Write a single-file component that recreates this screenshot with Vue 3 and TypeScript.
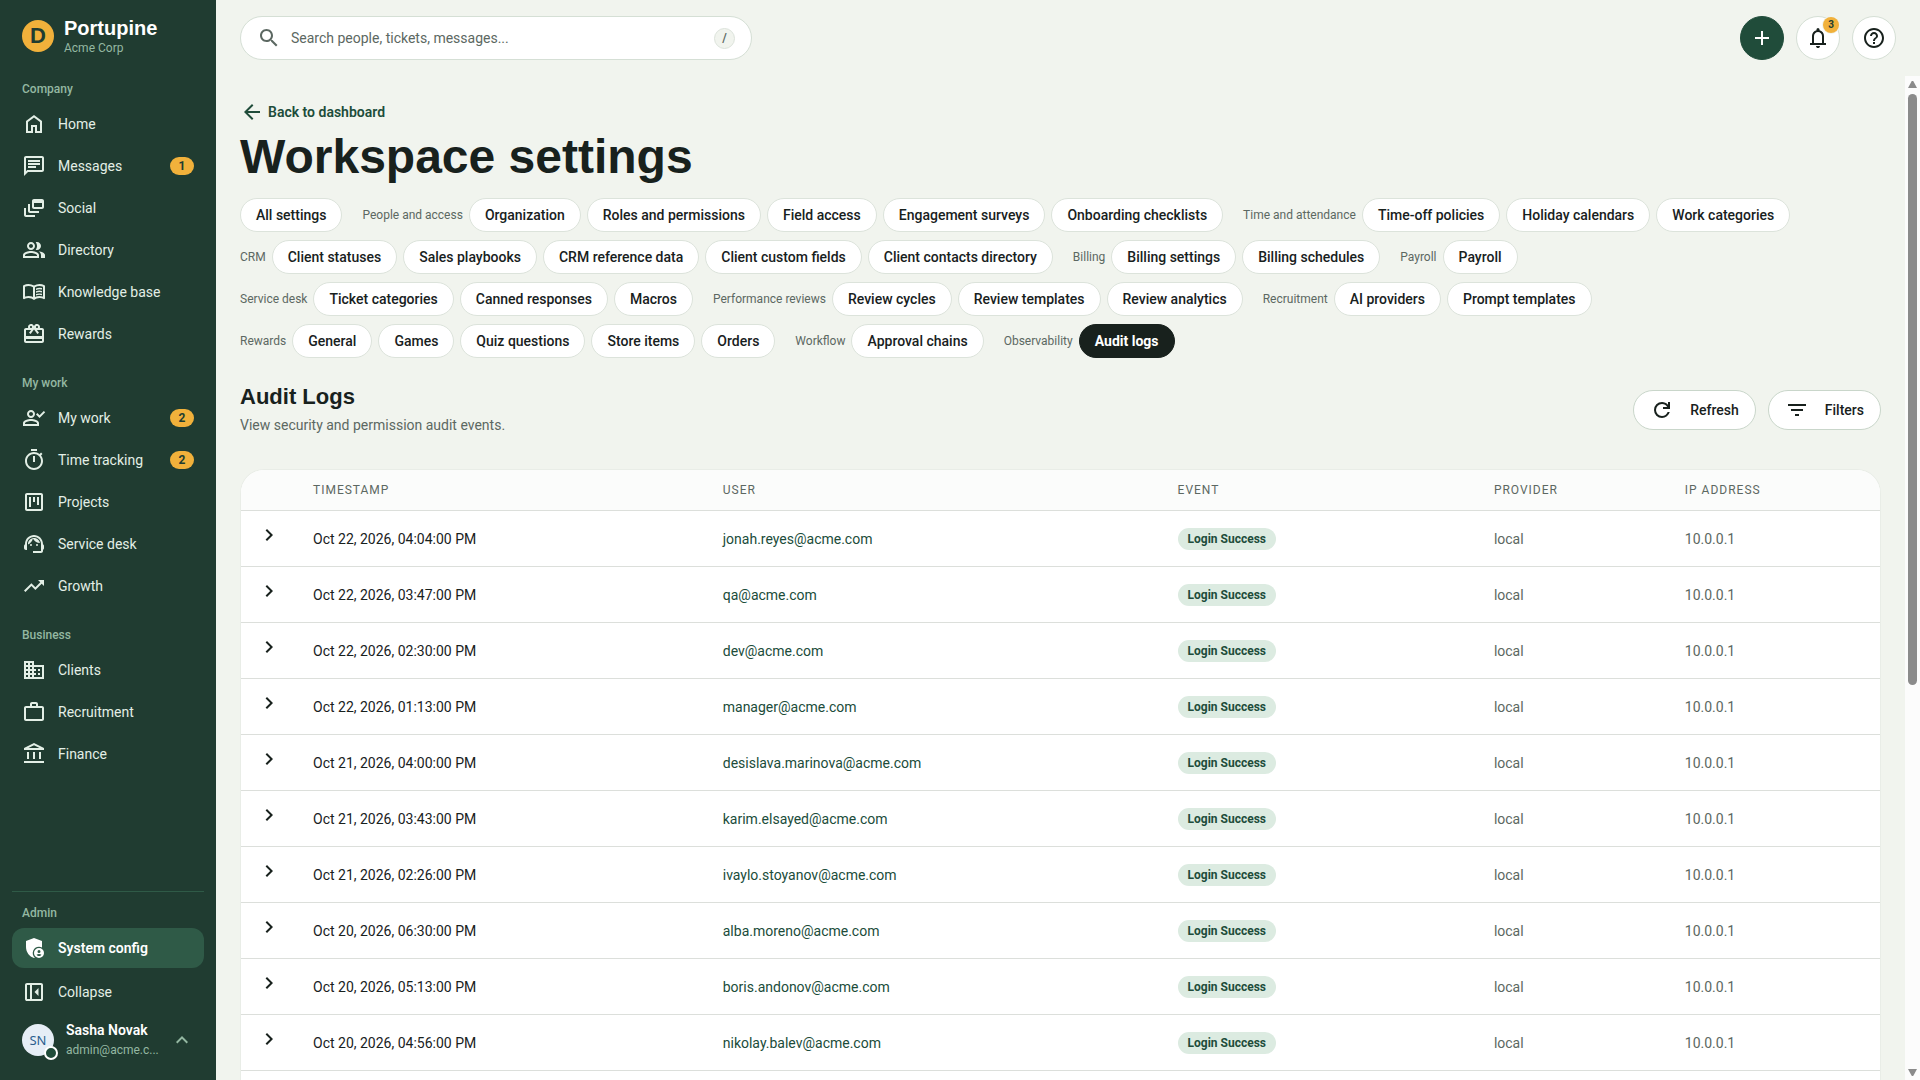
<script setup lang="ts">
import { ref } from 'vue'

interface NavItem { label: string; icon: string; badge?: number }
interface NavSection { title: string; items: NavItem[] }
interface ChipGroup { label?: string; chips: string[] }
interface LogRow { time: string; user: string }

const icons: Record<string, string> = {
  home: 'M6 19h3v-6h6v6h3v-9l-6-4.5L6 10v9zm-2 2V9l8-6 8 6v12h-7v-6h-2v6H4z',
  chat: 'M4 4h16v12H5.17L4 17.17V4m0-2c-1.1 0-1.99.9-1.99 2L2 22l4-4h14c1.1 0 2-.9 2-2V4c0-1.1-.9-2-2-2H4zm2 10h8v2H6v-2zm0-3h12v2H6V9zm0-3h12v2H6V6z',
  feed: 'M8 8H6v7c0 1.1.9 2 2 2h9v-2H8V8zM20 3h-8c-1.1 0-2 .9-2 2v6c0 1.1.9 2 2 2h8c1.1 0 2-.9 2-2V5c0-1.1-.9-2-2-2zm0 8h-8V7h8v4zM4 12H2v7c0 1.1.9 2 2 2h9v-2H4v-7z',
  group: 'M16.67 13.13C18.04 14.06 19 15.32 19 17v3h4v-3c0-2.18-3.57-3.47-6.33-3.87zM15 12c2.21 0 4-1.79 4-4s-1.79-4-4-4c-.47 0-.91.1-1.33.24C14.5 5.27 15 6.58 15 8s-.5 2.73-1.33 3.76c.42.14.86.24 1.33.24zM9 12c2.21 0 4-1.79 4-4s-1.79-4-4-4-4 1.79-4 4 1.79 4 4 4zm0-6c1.1 0 2 .9 2 2s-.9 2-2 2-2-.9-2-2 .9-2 2-2zm0 7c-2.67 0-8 1.34-8 4v3h16v-3c0-2.66-5.33-4-8-4zm6 5H3v-.99C3.2 16.29 6.3 15 9 15s5.8 1.29 6 2v1z',
  book: 'M6.5 16q1.17 0 2.28.26T11 17.05V7.2q-1.02-.6-2.17-.9T6.5 6q-.9 0-1.79.17T3 6.7v9.9q.87-.3 1.74-.45T6.5 16zM13 17.05q1.1-.52 2.21-.79T17.5 16q.9 0 1.76.15T21 16.6V6.7q-.82-.35-1.71-.52T17.5 6q-1.18 0-2.33.3T13 7.2zM12 20q-1.2-.95-2.6-1.48T6.5 18q-1.05 0-2.06.28T2.5 19.05q-.52.28-1.01-.02T1 18.15V6.1q0-.28.14-.52T1.55 5.2q1.15-.6 2.4-.9T6.5 4q1.45 0 2.84.38T12 5.5q1.28-.75 2.66-1.12T17.5 4q1.3 0 2.55.3t2.4.9q.28.13.41.38t.14.52v12.05q0 .57-.49.87t-1.01.03q-.92-.5-1.94-.77T17.5 18q-1.5 0-2.9.53T12 20zM14 8.5q1.7-.7 3.5-.7 1.25 0 2.5.3v1.5q-1.2-.35-2.5-.35-1.85 0-3.5.75zM14 11.3q1.7-.7 3.5-.7 1.25 0 2.5.3v1.5q-1.2-.35-2.5-.35-1.85 0-3.5.75zM14 14.1q1.7-.7 3.5-.7 1.25 0 2.5.3v1.5q-1.2-.35-2.5-.35-1.85 0-3.5.75z',
  gift: 'M20 6h-2.18c.11-.31.18-.65.18-1 0-1.66-1.34-3-3-3-1.05 0-1.96.54-2.5 1.35l-.5.67-.5-.68C10.96 2.54 10.05 2 9 2 7.34 2 6 3.34 6 5c0 .35.07.69.18 1H4c-1.11 0-1.99.89-1.99 2L2 19c0 1.11.89 2 2 2h16c1.11 0 2-.89 2-2V8c0-1.11-.89-2-2-2zm-5-2c.55 0 1 .45 1 1s-.45 1-1 1-1-.45-1-1 .45-1 1-1zM9 4c.55 0 1 .45 1 1s-.45 1-1 1-1-.45-1-1 .45-1 1-1zm11 15H4v-2h16v2zm0-5H4V8h5.08L7 10.83 8.62 12 11 8.76l1-1.36 1 1.36L15.38 12 17 10.83 14.92 8H20v6z',
  check: 'M17.55 12 14 8.45l1.43-1.4 2.12 2.1L21.8 4.9l1.4 1.43zM9 12c2.21 0 4-1.79 4-4s-1.79-4-4-4-4 1.79-4 4 1.79 4 4 4zm0-6c1.1 0 2 .9 2 2s-.9 2-2 2-2-.9-2-2 .9-2 2-2zm0 7c-2.67 0-8 1.34-8 4v3h16v-3c0-2.66-5.33-4-8-4zm6 5H3v-.99C3.2 16.29 6.3 15 9 15s5.8 1.29 6 2v1z',
  timer: 'M15 1H9v2h6V1zm-4 13h2V8h-2v6zm8.03-6.61 1.42-1.42c-.43-.51-.9-.99-1.41-1.41l-1.42 1.42C16.07 4.74 14.12 4 12 4c-4.97 0-9 4.03-9 9s4.02 9 9 9 9-4.03 9-9c0-2.12-.74-4.07-1.97-5.61zM12 20c-3.87 0-7-3.13-7-7s3.13-7 7-7 7 3.13 7 7-3.13 7-7 7z',
  kanban: 'M19 5v14H5V5h14m0-2H5c-1.1 0-2 .9-2 2v14c0 1.1.9 2 2 2h14c1.1 0 2-.9 2-2V5c0-1.1-.9-2-2-2zM7 7h2v10H7zM11 7h2v5h-2zM15 7h2v8h-2z',
  agent: 'M21 12.22C21 6.73 16.74 3 12 3c-4.69 0-9 3.65-9 9.28-.6.34-1 .98-1 1.72v2c0 1.1.9 2 2 2h1v-6.1c0-3.87 3.13-7 7-7s7 3.13 7 7V19h-8v2h8c1.1 0 2-.9 2-2v-1.22c.59-.31 1-.92 1-1.64v-2.3c0-.7-.41-1.31-1-1.62zM8 13a1 1 0 1 0 2 0 1 1 0 1 0-2 0zM14 13a1 1 0 1 0 2 0 1 1 0 1 0-2 0zM18 11.03C17.52 8.18 15.04 6 12.05 6c-3.03 0-6.29 2.51-6.03 6.45 2.47-1.01 4.33-3.21 4.86-5.89 1.31 2.63 4 4.44 7.12 4.47z',
  trend: 'm16 6 2.29 2.29-4.88 4.88-4-4L2 16.59 3.41 18l6-6 4 4 6.3-6.29L22 12V6z',
  domain: 'M12 7V3H2v18h20V7H12zM6 19H4v-2h2v2zm0-4H4v-2h2v2zm0-4H4V9h2v2zm0-4H4V5h2v2zm4 12H8v-2h2v2zm0-4H8v-2h2v2zm0-4H8V9h2v2zm0-4H8V5h2v2zm10 12h-8v-2h2v-2h-2v-2h2v-2h-2V9h8v10zm-2-8h-2v2h2v-2zm0 4h-2v2h2v-2z',
  work: 'M14 6V4h-4v2h4zM4 8v11h16V8H4zm16-2c1.11 0 2 .89 2 2v11c0 1.11-.89 2-2 2H4c-1.11 0-2-.89-2-2l.01-11c0-1.11.88-2 1.99-2h4V4c0-1.11.89-2 2-2h4c1.11 0 2 .89 2 2v2h4z',
  bank: 'M5 17v-7h2v7H5zm6 0v-7h2v7h-2zm-9 4v-2h20v2H2zm15-4v-7h2v7h-2zM2 8V6l10-5 10 5v2H2zm4.475-2h11.05L12 3.25 6.475 6z',
  admin: 'M12 2 4 5v6.1c0 5 3.4 9.7 8 10.9l.9-.3A6.3 6.3 0 0 1 17 10.7c1.05 0 2.1.26 3 .74V5zM17 12a5 5 0 1 0 0 10 5 5 0 0 0 0-10zm0 2a1.5 1.5 0 1 1 0 3 1.5 1.5 0 0 1 0-3zm0 6c-1 0-1.9-.5-2.5-1.25.7-.5 1.6-.75 2.5-.75s1.8.25 2.5.75C18.9 19.5 18 20 17 20z',
  panel: 'M16.5 16V8l-4 4zM5 21q-.825 0-1.412-.587T3 19V5q0-.825.588-1.412T5 3h14q.825 0 1.413.588T21 5v14q0 .825-.587 1.413T19 21zm3-2V5H5v14zm2 0h9V5h-9z',
  up: 'M12 8l-6 6 1.41 1.41L12 10.83l4.59 4.58L18 14z',
  search: 'M15.5 14h-.79l-.28-.27C15.41 12.59 16 11.11 16 9.5 16 5.91 13.09 3 9.5 3S3 5.91 3 9.5 5.91 16 9.5 16c1.61 0 3.09-.59 4.23-1.57l.27.28v.79l5 4.99L20.49 19l-4.99-5zm-6 0C7.01 14 5 11.99 5 9.5S7.01 5 9.5 5 14 7.01 14 9.5 11.99 14 9.5 14z',
  add: 'M19 13h-6v6h-2v-6H5v-2h6V5h2v6h6z',
  bell: 'M4 19v-2h2v-7q0-2.075 1.25-3.688T10.5 4.2v-.7q0-.625.438-1.062T12 2t1.063.438T13.5 3.5v.7q2 .5 3.25 2.113T18 10v7h2v2zm8 3q-.825 0-1.412-.587T10 20h4q0 .825-.587 1.413T12 22m-4-5h8v-7q0-1.65-1.175-2.825T12 6 9.175 7.175 8 10z',
  help: 'M11 18h2v-2h-2v2zm1-16C6.48 2 2 6.48 2 12s4.48 10 10 10 10-4.48 10-10S17.52 2 12 2zm0 18c-4.41 0-8-3.59-8-8s3.59-8 8-8 8 3.59 8 8-3.59 8-8 8zm0-14c-2.21 0-4 1.79-4 4h2c0-1.1.9-2 2-2s2 .9 2 2c0 2-3 1.75-3 5h2c0-2.25 3-2.5 3-5 0-2.21-1.79-4-4-4z',
  back: 'M20 11H7.83l5.59-5.59L12 4l-8 8 8 8 1.41-1.41L7.83 13H20v-2z',
  refresh: 'M12 20q-3.35 0-5.675-2.325T4 12t2.325-5.675T12 4q1.725 0 3.3.712T18 6.75V4h2v7h-7V9h4.2q-.8-1.4-2.187-2.2T12 6Q9.5 6 7.75 7.75T6 12t1.75 4.25T12 18q1.925 0 3.475-1.1T17.65 14h2.1q-.7 2.65-2.85 4.325T12 20',
  filter: 'M10 18h4v-2h-4v2zM3 6v2h18V6H3zm3 7h12v-2H6v2z',
  right: 'M10 6 8.59 7.41 13.17 12l-4.58 4.59L10 18l6-6z',
}

const sections: NavSection[] = [
  {
    title: 'Company',
    items: [
      { label: 'Home', icon: 'home' },
      { label: 'Messages', icon: 'chat', badge: 1 },
      { label: 'Social', icon: 'feed' },
      { label: 'Directory', icon: 'group' },
      { label: 'Knowledge base', icon: 'book' },
      { label: 'Rewards', icon: 'gift' },
    ],
  },
  {
    title: 'My work',
    items: [
      { label: 'My work', icon: 'check', badge: 2 },
      { label: 'Time tracking', icon: 'timer', badge: 2 },
      { label: 'Projects', icon: 'kanban' },
      { label: 'Service desk', icon: 'agent' },
      { label: 'Growth', icon: 'trend' },
    ],
  },
  {
    title: 'Business',
    items: [
      { label: 'Clients', icon: 'domain' },
      { label: 'Recruitment', icon: 'work' },
      { label: 'Finance', icon: 'bank' },
    ],
  },
]

const groups: ChipGroup[] = [
  { chips: ['All settings'] },
  { label: 'People and access', chips: ['Organization', 'Roles and permissions', 'Field access', 'Engagement surveys', 'Onboarding checklists'] },
  { label: 'Time and attendance', chips: ['Time-off policies', 'Holiday calendars', 'Work categories'] },
  { label: 'CRM', chips: ['Client statuses', 'Sales playbooks', 'CRM reference data', 'Client custom fields', 'Client contacts directory'] },
  { label: 'Billing', chips: ['Billing settings', 'Billing schedules'] },
  { label: 'Payroll', chips: ['Payroll'] },
  { label: 'Service desk', chips: ['Ticket categories', 'Canned responses', 'Macros'] },
  { label: 'Performance reviews', chips: ['Review cycles', 'Review templates', 'Review analytics'] },
  { label: 'Recruitment', chips: ['AI providers', 'Prompt templates'] },
  { label: 'Rewards', chips: ['General', 'Games', 'Quiz questions', 'Store items', 'Orders'] },
  { label: 'Workflow', chips: ['Approval chains'] },
  { label: 'Observability', chips: ['Audit logs'] },
]

const activeChip = ref('Audit logs')
const query = ref('')

const rows: LogRow[] = [
  { time: 'Oct 22, 2026, 04:04:00 PM', user: 'jonah.reyes@acme.com' },
  { time: 'Oct 22, 2026, 03:47:00 PM', user: 'qa@acme.com' },
  { time: 'Oct 22, 2026, 02:30:00 PM', user: 'dev@acme.com' },
  { time: 'Oct 22, 2026, 01:13:00 PM', user: 'manager@acme.com' },
  { time: 'Oct 21, 2026, 04:00:00 PM', user: 'desislava.marinova@acme.com' },
  { time: 'Oct 21, 2026, 03:43:00 PM', user: 'karim.elsayed@acme.com' },
  { time: 'Oct 21, 2026, 02:26:00 PM', user: 'ivaylo.stoyanov@acme.com' },
  { time: 'Oct 20, 2026, 06:30:00 PM', user: 'alba.moreno@acme.com' },
  { time: 'Oct 20, 2026, 05:13:00 PM', user: 'boris.andonov@acme.com' },
  { time: 'Oct 20, 2026, 04:56:00 PM', user: 'nikolay.balev@acme.com' },
]
</script>

<template>
  <div class="app">
    <aside class="sidebar">
      <div class="brand">
        <span class="logo" aria-hidden="true">D</span>
        <div class="brand-text">
          <span class="brand-name">Portupine</span>
          <span class="brand-org">Acme Corp</span>
        </div>
      </div>

      <nav class="nav" aria-label="Main">
        <section v-for="s in sections" :key="s.title">
          <h2 class="nav-title">{{ s.title }}</h2>
          <a v-for="i in s.items" :key="i.label" href="#" class="nav-item">
            <svg class="icon" viewBox="0 0 24 24" aria-hidden="true"><path :d="icons[i.icon]" /></svg>
            <span class="nav-label">{{ i.label }}</span>
            <span v-if="i.badge" class="badge">{{ i.badge }}</span>
          </a>
        </section>
      </nav>

      <div class="side-foot">
        <h2 class="nav-title foot-title">Admin</h2>
        <a href="#" class="nav-item active" aria-current="page">
          <svg class="icon" viewBox="0 0 24 24" aria-hidden="true"><path fill-rule="evenodd" :d="icons.admin" /></svg>
          <span class="nav-label">System config</span>
        </a>
        <button type="button" class="nav-item collapse">
          <svg class="icon" viewBox="0 0 24 24" aria-hidden="true"><path :d="icons.panel" /></svg>
          <span class="nav-label">Collapse</span>
        </button>
        <button type="button" class="user">
          <span class="avatar">SN<span class="status" /></span>
          <span class="user-text">
            <span class="user-name">Sasha Novak</span>
            <span class="user-mail">admin@acme.c...</span>
          </span>
          <svg class="icon user-chev" viewBox="0 0 24 24" aria-hidden="true"><path :d="icons.up" /></svg>
        </button>
      </div>
    </aside>

    <div class="main">
      <header class="topbar">
        <label class="search">
          <svg class="icon" viewBox="0 0 24 24" aria-hidden="true"><path :d="icons.search" /></svg>
          <input v-model="query" type="text" placeholder="Search people, tickets, messages..." aria-label="Search" />
          <kbd>/</kbd>
        </label>
        <div class="actions">
          <button type="button" class="round primary" aria-label="Create">
            <svg class="icon" viewBox="0 0 24 24" aria-hidden="true"><path :d="icons.add" /></svg>
          </button>
          <button type="button" class="round" aria-label="Notifications">
            <svg class="icon" viewBox="0 0 24 24" aria-hidden="true"><path :d="icons.bell" /></svg>
            <span class="count">3</span>
          </button>
          <button type="button" class="round" aria-label="Help">
            <svg class="icon" viewBox="0 0 24 24" aria-hidden="true"><path :d="icons.help" /></svg>
          </button>
        </div>
      </header>

      <div class="body">
        <main class="content">
          <a href="#" class="back">
            <svg class="icon" viewBox="0 0 24 24" aria-hidden="true"><path :d="icons.back" /></svg>
            Back to dashboard
          </a>
          <h1>Workspace settings</h1>

          <nav class="chips" aria-label="Settings">
            <div v-for="(g, n) in groups" :key="n" class="chip-group">
              <span v-if="g.label" class="chip-label">{{ g.label }}</span>
              <a
                v-for="c in g.chips"
                :key="c"
                href="#"
                class="chip"
                :class="{ selected: c === activeChip }"
                @click.prevent="activeChip = c"
              >{{ c }}</a>
            </div>
          </nav>

          <div class="page-head">
            <div>
              <h2>Audit Logs</h2>
              <p>View security and permission audit events.</p>
            </div>
            <div class="page-actions">
              <button type="button" class="outlined">
                <svg class="icon" viewBox="0 0 24 24" aria-hidden="true"><path :d="icons.refresh" /></svg>
                Refresh
              </button>
              <button type="button" class="outlined">
                <svg class="icon" viewBox="0 0 24 24" aria-hidden="true"><path :d="icons.filter" /></svg>
                Filters
              </button>
            </div>
          </div>

          <div class="card">
            <table>
              <colgroup>
                <col class="c-open" /><col class="c-time" /><col class="c-user" /><col class="c-event" /><col class="c-prov" /><col />
              </colgroup>
              <thead>
                <tr>
                  <td></td>
                  <th scope="col">TIMESTAMP</th>
                  <th scope="col">USER</th>
                  <th scope="col">EVENT</th>
                  <th scope="col">PROVIDER</th>
                  <th scope="col">IP ADDRESS</th>
                </tr>
              </thead>
              <tbody>
                <tr v-for="r in rows" :key="r.time">
                  <td class="open-cell">
                    <button type="button" class="open" aria-label="Expand row">
                      <svg class="icon" viewBox="0 0 24 24" aria-hidden="true"><path :d="icons.right" /></svg>
                    </button>
                  </td>
                  <td>{{ r.time }}</td>
                  <td class="mail">{{ r.user }}</td>
                  <td><span class="event">Login Success</span></td>
                  <td class="muted">local</td>
                  <td class="muted">10.0.0.1</td>
                </tr>
              </tbody>
            </table>
          </div>
        </main>

        <div class="scrollbar" aria-hidden="true">
          <svg viewBox="0 0 9 7"><path d="M3.5.6a1.2 1.2 0 0 1 2 0L9 7H0z" /></svg>
          <div class="track"><div class="thumb" /></div>
          <svg viewBox="0 0 9 7"><path d="M3.5 6.4a1.2 1.2 0 0 0 2 0L9 0H0z" /></svg>
        </div>
      </div>
    </div>
  </div>
</template>

<style>
body {
  margin: 0;
  background: #f1f4ee;
}
</style>

<style scoped>
.app {
  --sans: Roboto, "Noto Sans", sans-serif;
  --display: "Liberation Sans", Arial, sans-serif;
  --ink: #18211d;
  --green: #204c3a;
  --muted: #5c6862;
  --line: #dce3db;
  display: flex;
  height: 100vh;
  overflow: hidden;
  background: #f1f4ee;
  color: var(--ink);
  font: 14px/20px var(--sans);
}
.app *,
.app *::before {
  box-sizing: border-box;
}
a {
  color: inherit;
  text-decoration: none;
}
button {
  margin: 0;
  border: 0;
  background: none;
  color: inherit;
  font: inherit;
  text-align: left;
  cursor: pointer;
}
h1,
h2,
p {
  margin: 0;
}
.icon {
  flex: none;
  display: block;
  width: 24px;
  height: 24px;
  fill: currentColor;
}

/* Sidebar */
.sidebar {
  flex: none;
  display: flex;
  flex-direction: column;
  width: 216px;
  padding: 0 12px 12px;
  background: #203c31;
  color: #e3efe6;
}
.brand {
  display: flex;
  align-items: center;
  gap: 10px;
  height: 60px;
  padding: 12px 10px 0;
}
.logo {
  display: grid;
  place-items: center;
  width: 32px;
  height: 32px;
  border-radius: 50%;
  background: #f1b13b;
  color: #203c31;
  font: bold 22px/32px var(--display);
}
.brand-text {
  display: flex;
  flex-direction: column;
}
.brand-name {
  color: #fff;
  font: bold 20px/24px var(--display);
}
.brand-org {
  color: #94b8a2;
  font-size: 12px;
  line-height: 16px;
}
.nav {
  flex: 1;
  min-height: 0;
  overflow: hidden;
}
.nav-title {
  height: 44px;
  padding: 20px 10px 0;
  color: #94b8a2;
  font-size: 12px;
  line-height: 18px;
  font-weight: 500;
}
.nav-item {
  display: flex;
  align-items: center;
  gap: 12px;
  width: 100%;
  height: 40px;
  margin-bottom: 2px;
  padding: 0 10px;
  border-radius: 12px;
}
section .nav-item:last-child {
  margin-bottom: 0;
}
.nav-label {
  flex: 1;
}
.badge {
  width: 24px;
  height: 18px;
  border-radius: 9px;
  background: #f1b13b;
  color: #203c31;
  font-size: 12px;
  line-height: 18px;
  font-weight: 700;
  text-align: center;
}
.side-foot {
  border-top: 1px solid #2f5a47;
}
.foot-title {
  height: 36px;
  padding-top: 12px;
}
.active {
  margin-bottom: 4px;
  background: #2f5a47;
  color: #fff;
}
.active .nav-label {
  font-weight: 600;
}
.collapse {
  margin-bottom: 0;
}
.user {
  display: flex;
  align-items: center;
  gap: 12px;
  width: 100%;
  height: 56px;
  padding: 0 10px;
}
.avatar {
  position: relative;
  flex: none;
  width: 32px;
  height: 32px;
  border-radius: 50%;
  background: #e6eef6;
  color: #2a5f8f;
  font: 13px/32px "Noto Sans", sans-serif;
  text-align: center;
}
.status {
  position: absolute;
  right: -4px;
  bottom: -4px;
  width: 14px;
  height: 14px;
  border: 2px solid #fff;
  border-radius: 50%;
  background: #204c3a;
}
.user-text {
  flex: 1;
  min-width: 0;
  display: flex;
  flex-direction: column;
}
.user-name {
  color: #fff;
  font-weight: 600;
}
.user-mail {
  color: #94b8a2;
  font-size: 12px;
  white-space: nowrap;
}
.user-chev {
  color: #94b8a2;
}

/* Top bar */
.main {
  flex: 1;
  min-width: 0;
  display: flex;
  flex-direction: column;
}
.topbar {
  flex: none;
  display: flex;
  justify-content: space-between;
  align-items: center;
  height: 76px;
  padding: 0 24px;
}
.search {
  display: flex;
  align-items: center;
  gap: 10px;
  width: 512px;
  height: 44px;
  padding: 0 16px;
  border: 1px solid #d5dfd5;
  border-radius: 22px;
  background: #fff;
  color: var(--muted);
}
.search input {
  flex: 1;
  min-width: 0;
  padding: 0;
  border: 0;
  outline: 0;
  background: none;
  color: var(--ink);
  font: inherit;
}
.search input::placeholder {
  color: var(--muted);
  opacity: 1;
}
kbd {
  width: 21px;
  height: 21px;
  border: 1px solid var(--line);
  border-radius: 50%;
  background: #f1f4ee;
  font: 600 12px/19px var(--sans);
  text-align: center;
}
.actions {
  display: flex;
  gap: 12px;
}
.round {
  position: relative;
  display: grid;
  place-items: center;
  width: 44px;
  height: 44px;
  padding: 0;
  border: 1px solid #d5dfd5;
  border-radius: 50%;
  background: #fff;
}
.primary {
  border-color: var(--green);
  background: var(--green);
  color: #fff;
}
.count {
  position: absolute;
  top: 0;
  right: 0;
  width: 16px;
  height: 16px;
  border-radius: 50%;
  background: #f1b13b;
  box-shadow: 0 0 0 1px #f1f4ee;
  color: #203c31;
  font-size: 10px;
  line-height: 16px;
  font-weight: 700;
  text-align: center;
}

/* Content */
.body {
  flex: 1;
  min-height: 0;
  display: flex;
}
.content {
  flex: 1;
  min-width: 0;
  display: flex;
  flex-direction: column;
  padding: 24px 24px 0;
  overflow-y: auto;
  scrollbar-width: none;
}
.back {
  display: flex;
  align-items: center;
  gap: 4px;
  width: max-content;
  color: var(--green);
  font-weight: 600;
}
h1 {
  margin: 7px 0 15px;
  font: bold 48px/52px var(--display);
}
.chips {
  display: flex;
  flex-wrap: wrap;
  gap: 8px 20px;
}
.chip-group {
  display: flex;
  align-items: center;
  gap: 6px;
}
.chip-label {
  color: var(--muted);
  font-size: 12px;
  white-space: nowrap;
}
.chip {
  height: 34px;
  padding: 0 15px;
  border: 1px solid var(--line);
  border-radius: 17px;
  background: #fff;
  font-weight: 500;
  line-height: 32px;
  white-space: nowrap;
}
.selected {
  border-color: var(--ink);
  background: var(--ink);
  color: #fff;
  font-weight: 700;
}
.page-head {
  display: flex;
  justify-content: space-between;
  align-items: center;
  margin: 25px 0 33px;
}
.page-head h2 {
  margin-bottom: 3px;
  font: bold 22px/28px var(--display);
}
.page-head p {
  color: var(--muted);
  line-height: 22px;
}
.page-actions {
  display: flex;
  gap: 12px;
}
.outlined {
  display: flex;
  align-items: center;
  gap: 16px;
  height: 40px;
  padding: 0 16px;
  border: 1px solid #c9d6ca;
  border-radius: 20px;
  background: #fff;
  font-weight: 500;
}
.card {
  flex: 1 0 auto;
  overflow: hidden;
  border: 1px solid #e9ede7;
  border-bottom: 0;
  border-radius: 24px 24px 0 0;
  background: #fff;
}
table {
  width: 100%;
  border-collapse: separate;
  border-spacing: 0;
  table-layout: fixed;
}
.c-open { width: 56px; }
.c-time { width: 25%; }
.c-user { width: 27.75%; }
.c-event { width: 19.3%; }
.c-prov { width: 11.65%; }
th,
td {
  padding: 0 16px;
  border-bottom: 1px solid #dcdfdb;
  text-align: left;
}
thead th,
thead td {
  height: 41px;
  background: #fbfcfb;
  color: var(--muted);
  font-size: 12px;
  font-weight: 400;
  letter-spacing: 1px;
}
tbody td {
  height: 56px;
}
.open-cell {
  padding-top: 12px;
  vertical-align: top;
}
.open {
  display: block;
  padding: 0;
}
.mail {
  color: var(--green);
}
.muted {
  color: var(--muted);
}
.event {
  display: inline-block;
  height: 22px;
  padding: 0 10px;
  border-radius: 11px;
  background: #dcebe1;
  color: var(--green);
  font-size: 12px;
  line-height: 22px;
  font-weight: 700;
}

/* Scroll rail */
.scrollbar {
  flex: none;
  display: flex;
  flex-direction: column;
  align-items: center;
  gap: 6px;
  width: 15px;
  padding: 5px 0 4px;
  background: #fcfcfc;
}
.scrollbar svg {
  width: 9px;
  height: 7px;
  fill: #8b8b8b;
}
.track {
  flex: 1;
  width: 9px;
}
.thumb {
  height: 61%;
  border-radius: 5px;
  background: #8b8b8b;
}
</style>
